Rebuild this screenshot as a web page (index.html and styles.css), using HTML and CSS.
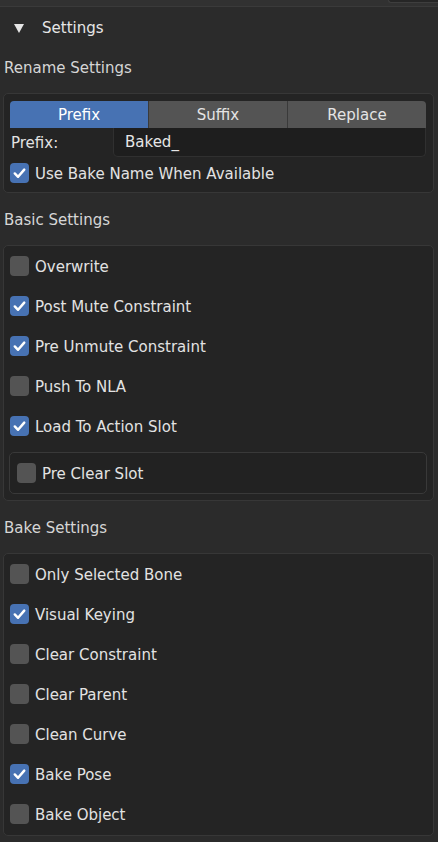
FILE: index.html
```html
<!DOCTYPE html>
<html>
<head>
<meta charset="utf-8">
<link rel="stylesheet" href="styles.css">
</head>
<body>
<div class="topbar"><div class="topbar-tab"></div></div>
<div class="panel-header">
  <svg class="tri" width="10" height="9" viewBox="0 0 10 9"><path d="M0 0 H10 L5 9 Z" fill="#e6e6e6"/></svg>
  <span>Settings</span>
</div>

<div class="section-label">Rename Settings</div>
<div class="box">
  <div class="tabs">
    <div class="tab active">Prefix</div>
    <div class="tab">Suffix</div>
    <div class="tab">Replace</div>
  </div>
  <div class="field-row">
    <div class="field-label">Prefix:</div>
    <div class="field">Baked_</div>
  </div>
  <div class="check-row compact">
    <span class="cb on"><svg viewBox="0 0 20 20"><path d="M5 10.5 L8.5 14 L15 6.5" /></svg></span>
    <span>Use Bake Name When Available</span>
  </div>
</div>

<div class="section-label">Basic Settings</div>
<div class="box">
  <div class="check-row"><span class="cb"></span><span>Overwrite</span></div>
  <div class="check-row"><span class="cb on"><svg viewBox="0 0 20 20"><path d="M5 10.5 L8.5 14 L15 6.5" /></svg></span><span>Post Mute Constraint</span></div>
  <div class="check-row"><span class="cb on"><svg viewBox="0 0 20 20"><path d="M5 10.5 L8.5 14 L15 6.5" /></svg></span><span>Pre Unmute Constraint</span></div>
  <div class="check-row"><span class="cb"></span><span>Push To NLA</span></div>
  <div class="check-row"><span class="cb on"><svg viewBox="0 0 20 20"><path d="M5 10.5 L8.5 14 L15 6.5" /></svg></span><span>Load To Action Slot</span></div>
  <div class="inner-box">
    <div class="check-row inner"><span class="cb"></span><span>Pre Clear Slot</span></div>
  </div>
</div>

<div class="section-label">Bake Settings</div>
<div class="box last">
  <div class="check-row"><span class="cb"></span><span>Only Selected Bone</span></div>
  <div class="check-row"><span class="cb on"><svg viewBox="0 0 20 20"><path d="M5 10.5 L8.5 14 L15 6.5" /></svg></span><span>Visual Keying</span></div>
  <div class="check-row"><span class="cb"></span><span>Clear Constraint</span></div>
  <div class="check-row"><span class="cb"></span><span>Clear Parent</span></div>
  <div class="check-row"><span class="cb"></span><span>Clean Curve</span></div>
  <div class="check-row"><span class="cb on"><svg viewBox="0 0 20 20"><path d="M5 10.5 L8.5 14 L15 6.5" /></svg></span><span>Bake Pose</span></div>
  <div class="check-row"><span class="cb"></span><span>Bake Object</span></div>
</div>
</body>
</html>
```

FILE: styles.css
```css
* { box-sizing: border-box; }
html, body {
  margin: 0;
  padding: 0;
  background: #2b2b2b;
  color: #e2e2e2;
  font-family: "DejaVu Sans", sans-serif;
  font-size: 15px;
  width: 438px;
  height: 842px;
  overflow: hidden;
}
.topbar {
  height: 7px;
  background: #313131;
  border-bottom: 1px solid #3a3a3a;
  display: flex;
  justify-content: flex-end;
}
.topbar-tab {
  width: 50px;
  height: 3px;
  background: #262626;
  border: 1px solid #3e3e3e;
  border-top: none;
  border-right: none;
  border-bottom-left-radius: 4px;
}
.panel-header {
  height: 34px;
  padding-top: 11px;
  display: flex;
  align-items: flex-start;
  line-height: 20px;
  color: #e6e6e6;
}
.tri {
  margin: 6px 18px 0 14px;
  display: block;
}
.section-label {
  height: 52px;
  line-height: 54px;
  padding-left: 4px;
  color: #d6d6d6;
}
.box {
  margin: 0 4px 0 3px;
  background: #242424;
  border: 1px solid #373737;
  border-radius: 5px;
  padding: 0 7px 6px 6px;
}
.tabs {
  margin-top: 7px;
  display: flex;
  height: 27px;
  border-radius: 4px 4px 0 0;
  overflow: hidden;
}
.tab {
  flex: 1;
  background: #545454;
  color: #e4e4e4;
  text-align: center;
  line-height: 28px;
  border-left: 1px solid #3a3a3a;
}
.tab.active {
  background: #4772b3;
  color: #ffffff;
  border-left: none;
}
.field-row {
  display: flex;
  height: 29px;
}
.field-label {
  width: 103px;
  padding-left: 1px;
  line-height: 30px;
  color: #e2e2e2;
}
.field {
  flex: 1;
  background: #1e1e1e;
  border: 1px solid #303030;
  border-top: none;
  border-radius: 0 0 5px 5px;
  padding-left: 11px;
  line-height: 29px;
  color: #e6e6e6;
}
.check-row {
  display: flex;
  align-items: center;
  height: 40px;
  gap: 6px;
}
.check-row > span:last-child {
  padding-top: 1px;
}
.check-row.compact {
  height: 24px;
  margin-top: 4px;
  margin-bottom: 1px;
}
.cb {
  width: 19px;
  height: 20px;
  border-radius: 4px;
  background: #545454;
  flex: none;
  display: flex;
  align-items: center;
  justify-content: center;
  padding-top: 0 !important;
}
.cb.on { background: #4772b3; }
.cb svg {
  width: 19px;
  height: 20px;
  display: block;
}
.cb svg path {
  fill: none;
  stroke: #ffffff;
  stroke-width: 2.6;
  stroke-linecap: round;
  stroke-linejoin: round;
}
.inner-box {
  margin: 6px -1px 0 -1px;
  height: 42px;
  border: 1px solid #393939;
  border-radius: 5px;
  background: #222222;
  padding-left: 7px;
}
.check-row.inner { height: 40px; }
.box.last { padding-bottom: 1px; }
```
